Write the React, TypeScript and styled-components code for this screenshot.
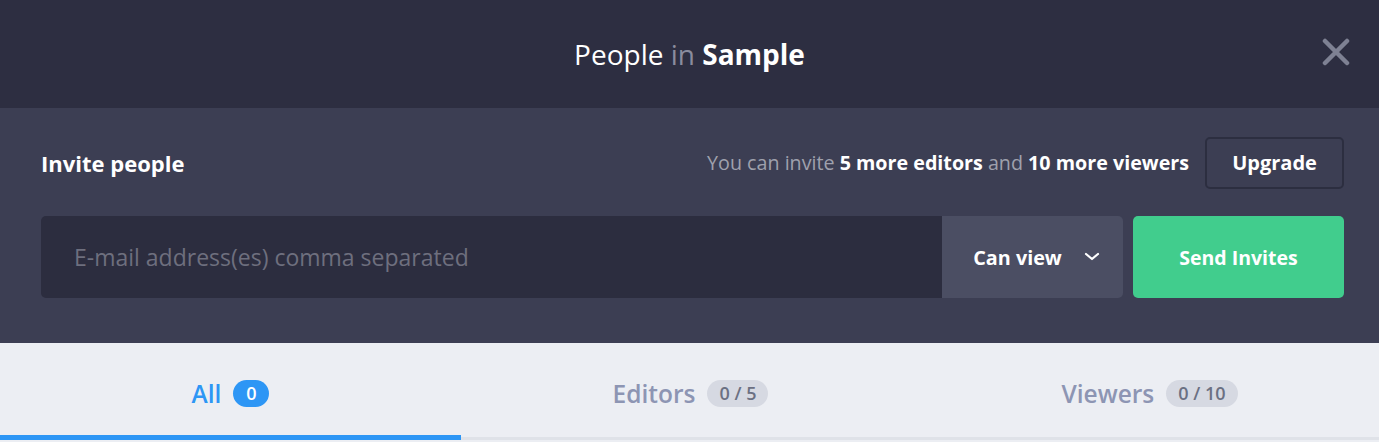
import React from "react";
import styled, { createGlobalStyle } from "styled-components";

const Global = createGlobalStyle`
  html, body { margin: 0; padding: 0; background: #eceef3; }
  body { font-family: "Open Sans", "Noto Sans", sans-serif; -webkit-font-smoothing: antialiased; }
  * { box-sizing: border-box; }
`;

const Modal = styled.div`
  width: 1379px;
  display: flex;
  flex-direction: column;
`;

const Header = styled.header`
  height: 108px;
  background: #2d2e41;
  display: flex;
  align-items: center;
  justify-content: center;
  position: relative;
`;

const Title = styled.h1`
  margin: 0;
  font-size: 28px;
  font-weight: 400;
  color: #ffffff;
  span { color: #8a8c9e; }
  strong { font-weight: 700; }
`;

const Close = styled.button`
  position: absolute;
  right: 29px;
  top: 38px;
  width: 28px;
  height: 28px;
  padding: 0;
  border: none;
  background: none;
  cursor: pointer;
  display: flex;
  align-items: center;
  justify-content: center;
`;

const Invite = styled.section`
  background: #3c3e53;
  padding: 29px 35px 45px 41px;
  display: flex;
  flex-direction: column;
  gap: 28px;
`;

const InviteTop = styled.div`
  display: flex;
  align-items: center;
  justify-content: space-between;
  height: 51px;
`;

const InviteTitle = styled.h2`
  margin: 0;
  font-size: 22px;
  font-weight: 700;
  color: #ffffff;
`;

const Quota = styled.div`
  display: flex;
  align-items: center;
  gap: 16px;
`;

const QuotaText = styled.p`
  margin: 0;
  font-size: 19.7px;
  color: #9fa1ad;
  b { color: #ffffff; font-weight: 700; }
`;

const Upgrade = styled.button`
  width: 139px;
  height: 52px;
  border: 2px solid #2c2e40;
  border-radius: 5px;
  background: transparent;
  color: #ffffff;
  font-family: inherit;
  font-size: 20px;
  font-weight: 700;
`;

const InputRow = styled.div`
  display: flex;
  height: 82px;
`;

const Email = styled.input`
  flex: 1;
  height: 100%;
  border: none;
  outline: none;
  border-radius: 5px 0 0 5px;
  background: #2c2d3f;
  padding: 0 33px;
  font-family: inherit;
  font-size: 23px;
  color: #ffffff;
  &::placeholder { color: #6e6f7e; }
`;

const Select = styled.button`
  width: 181px;
  height: 100%;
  border: none;
  border-radius: 0 5px 5px 0;
  background: #4b4e63;
  color: #ffffff;
  font-family: inherit;
  font-size: 19.8px;
  font-weight: 700;
  display: flex;
  align-items: center;
  justify-content: center;
  gap: 22px;
  padding-left: 14px;
`;

const Send = styled.button`
  width: 211px;
  margin-left: 10px;
  height: 100%;
  border: none;
  border-radius: 5px;
  background: #41cd8d;
  color: #ffffff;
  font-family: inherit;
  font-size: 19.5px;
  font-weight: 700;
`;

const Tabs = styled.nav`
  display: grid;
  grid-template-columns: 461px 1fr 1fr;
  background: #eceef3;
  border-bottom: 3px solid #dfe2e8;
`;

const Tab = styled.div<{ $active?: boolean }>`
  height: 97px;
  display: flex;
  align-items: center;
  justify-content: center;
  gap: 12px;
  padding-top: 8px;
  font-size: 24.5px;
  font-weight: 600;
  color: ${(p) => (p.$active ? "#2d96f5" : "#8d95b3")};
  border-bottom: 5px solid ${(p) => (p.$active ? "#2d96f5" : "transparent")};
  margin-bottom: -3px;
`;

const Badge = styled.span<{ $active?: boolean }>`
  height: 27px;
  min-width: 36px;
  padding: 0 12px;
  border-radius: 14px;
  display: inline-flex;
  align-items: center;
  justify-content: center;
  font-size: 18px;
  font-weight: 600;
  background: ${(p) => (p.$active ? "#2d96f5" : "#d6d9e2")};
  color: ${(p) => (p.$active ? "#ffffff" : "#6b7082")};
`;

export default function App() {
  return (
    <>
      <Global />
      <Modal>
        <Header>
          <Title>
            People <span>in</span> <strong>Sample</strong>
          </Title>
          <Close aria-label="Close">
            <svg width="28" height="28" viewBox="0 0 28 28">
              <path d="M3 3L25 25M25 3L3 25" stroke="#7e8193" strokeWidth="4.5" strokeLinecap="round" />
            </svg>
          </Close>
        </Header>
        <Invite>
          <InviteTop>
            <InviteTitle>Invite people</InviteTitle>
            <Quota>
              <QuotaText>
                You can invite <b>5 more editors</b> and <b>10 more viewers</b>
              </QuotaText>
              <Upgrade>Upgrade</Upgrade>
            </Quota>
          </InviteTop>
          <InputRow>
            <Email placeholder="E-mail address(es) comma separated" />
            <Select>
              Can view
              <svg width="16" height="10" viewBox="0 0 16 10">
                <path d="M2 2L8 7L14 2" stroke="#ffffff" strokeWidth="2.2" fill="none" strokeLinecap="round" strokeLinejoin="round" />
              </svg>
            </Select>
            <Send>Send Invites</Send>
          </InputRow>
        </Invite>
        <Tabs>
          <Tab $active>
            All <Badge $active>0</Badge>
          </Tab>
          <Tab>
            Editors <Badge>0 / 5</Badge>
          </Tab>
          <Tab>
            Viewers <Badge>0 / 10</Badge>
          </Tab>
        </Tabs>
      </Modal>
    </>
  );
}
